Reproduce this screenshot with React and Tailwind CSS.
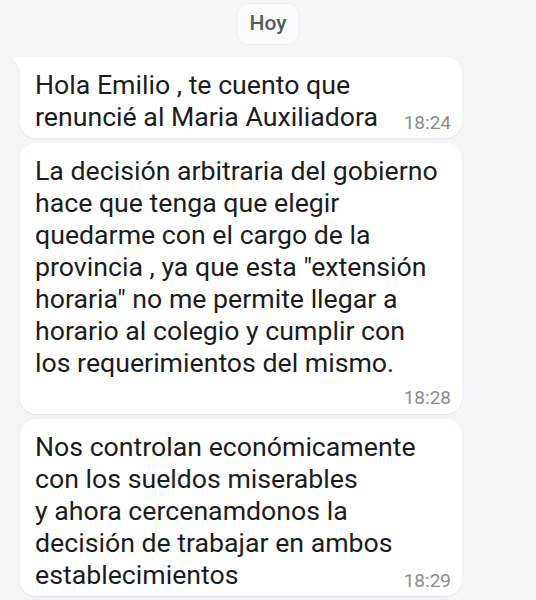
import React from 'react';

const font = { fontFamily: 'Roboto, "Noto Sans", sans-serif' };

const Time = ({ children, className = '' }) => (
    <span className={`text-[19px] leading-none text-[#8a8c90] ${className}`}>{children}</span>
);

const Bubble = ({ lines, time, tail, timeBelow }) => (
    <div className={`relative ml-[20px] w-[442px] bg-white rounded-[16px] shadow-[0_1px_1.5px_rgba(0,0,0,0.07)] ${tail ? 'rounded-tl-none' : ''}`}>
        {tail && (
            <svg className="absolute -left-[8px] top-0" width="9" height="14" viewBox="0 0 9 14">
                <path d="M0 0 H9 V14 Z" fill="#ffffff" />
            </svg>
        )}
        <div className="pl-[15px] pr-[11px] pt-[12px] pb-[5px]">
            <p className="text-[26.7px] leading-[32px] text-[#1c1c1e] whitespace-nowrap">
                {lines.map((l, i) => (
                    <React.Fragment key={i}>
                        {l}
                        {i < lines.length - 1 && <br />}
                    </React.Fragment>
                ))}
                {!timeBelow && <span className="inline-block w-[58px]" />}
            </p>
            {timeBelow && (
                <div className="text-right mt-[6px] h-[24px] flex items-center justify-end">
                    <Time>{time}</Time>
                </div>
            )}
        </div>
        {!timeBelow && <Time className="absolute right-[11px] bottom-[6px]">{time}</Time>}
    </div>
);

export default function App() {
    return (
        <div className="w-[536px] h-[600px] overflow-hidden bg-[#f4f5f8]" style={font}>
            <div className="flex justify-center pt-[3px]">
                <div className="w-[62px] h-[42px] rounded-[11px] bg-[#f9fafc] border border-[#eceef1] flex items-center justify-center">
                    <span className="text-[21px] font-medium text-[#57595d]">Hoy</span>
                </div>
            </div>

            <div className="flex flex-col gap-[5px] mt-[12px]">
                <Bubble
                    tail
                    time="18:24"
                    lines={['Hola Emilio , te cuento que', 'renuncié al Maria Auxiliadora']}
                />
                <Bubble
                    timeBelow
                    time="18:28"
                    lines={[
                        'La decisión arbitraria del gobierno',
                        'hace que tenga que elegir',
                        'quedarme con el cargo de la',
                        'provincia , ya que esta "extensión',
                        'horaria" no me permite llegar a',
                        'horario al colegio y cumplir con',
                        'los requerimientos del mismo.',
                    ]}
                />
                <Bubble
                    time="18:29"
                    lines={[
                        'Nos controlan económicamente',
                        'con los sueldos miserables',
                        'y ahora cercenamdonos la',
                        'decisión de trabajar en ambos',
                        'establecimientos',
                    ]}
                />
            </div>
        </div>
    );
}
